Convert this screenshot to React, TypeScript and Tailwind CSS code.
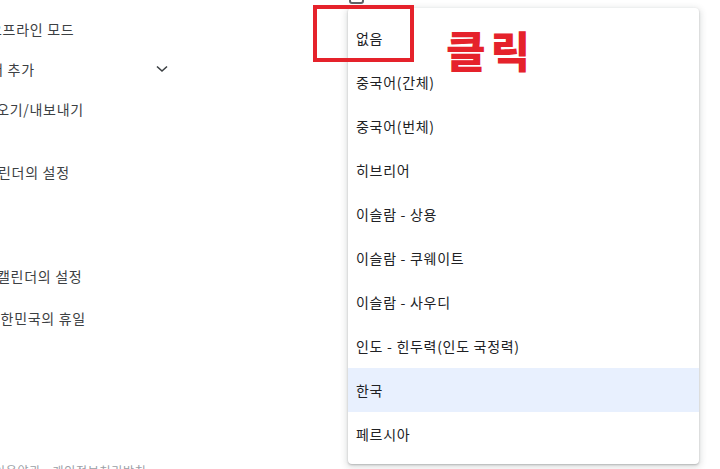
import React from "react";

const langs = [
  "없음",
  "중국어(간체)",
  "중국어(번체)",
  "히브리어",
  "이슬람 - 상용",
  "이슬람 - 쿠웨이트",
  "이슬람 - 사우디",
  "인도 - 힌두력(인도 국정력)",
  "한국",
  "페르시아",
];

const font = { fontFamily: '"Noto Sans CJK KR", "Noto Sans", sans-serif' };

export default function App() {
  return (
    <div
      className="relative w-[720px] h-[469px] bg-white overflow-hidden text-[14px] tracking-[0.7px] text-[#3c4043]"
      style={font}
    >
      {/* left settings list, clipped on the left */}
      <div className="flex flex-col w-[200px]">
        <div className="h-[49px] pt-[19px] leading-[20px] whitespace-nowrap">
          <span className="ml-[-11px]">오프라인 모드</span>
        </div>
        <div className="h-[40px] flex items-center justify-between pr-[32px] whitespace-nowrap">
          <span className="ml-[-37px]">캘린더 추가</span>
          <svg width="12" height="8" viewBox="0 0 12 8">
            <path d="M1 1.5 L6 6 L11 1.5" fill="none" stroke="#3c4043" strokeWidth="1.6" />
          </svg>
        </div>
        <div className="h-[40px] flex items-center whitespace-nowrap">
          <span className="ml-[-31px]">가져오기/내보내기</span>
        </div>
        <div className="h-[63px] flex items-end pb-[10px] leading-[20px] whitespace-nowrap">
          <span className="ml-[-33px]">내 캘린더의 설정</span>
        </div>
        <div className="h-[104px] flex items-end pb-[10px] leading-[20px] whitespace-nowrap">
          <span className="ml-[-34px]">다른 캘린더의 설정</span>
        </div>
        <div className="h-[42px] flex items-end pb-[10px] leading-[20px] whitespace-nowrap">
          <span className="ml-[-13px]">대한민국의 휴일</span>
        </div>
        <div className="mt-[124px] text-[12px] text-[#9aa0a6] whitespace-nowrap">
          <span className="ml-[-6px]">이용약관 - 개인정보처리방침</span>
        </div>
      </div>

      {/* checkbox peeking from above */}
      <div className="absolute left-[349px] top-[-14px] w-[15px] h-[18px] border-2 border-[#5f6368] rounded-[3px]" />

      {/* dropdown menu */}
      <div className="absolute left-[348px] top-[8px] w-[351px] py-[8px] bg-white rounded-[4px] shadow-[0_2px_6px_2px_rgba(60,64,67,0.15),0_1px_2px_rgba(60,64,67,0.3)]">
        {langs.map((l) => (
          <div
            key={l}
            className={
              "h-[44px] flex items-center px-[8px] text-[#202124] whitespace-nowrap " +
              (l === "한국" ? "bg-[#e8f0fe]" : "")
            }
          >
            {l}
          </div>
        ))}
      </div>

      {/* annotation */}
      <div className="absolute left-[313px] top-[5px] w-[101px] h-[57px] border-[4px] border-[#e5222b]" />
      <div
        className="absolute left-[446px] top-[21px] text-[43px] leading-[56px] font-black text-[#e5222b] tracking-[5px]"
        style={font}
      >
        클릭
      </div>
    </div>
  );
}
